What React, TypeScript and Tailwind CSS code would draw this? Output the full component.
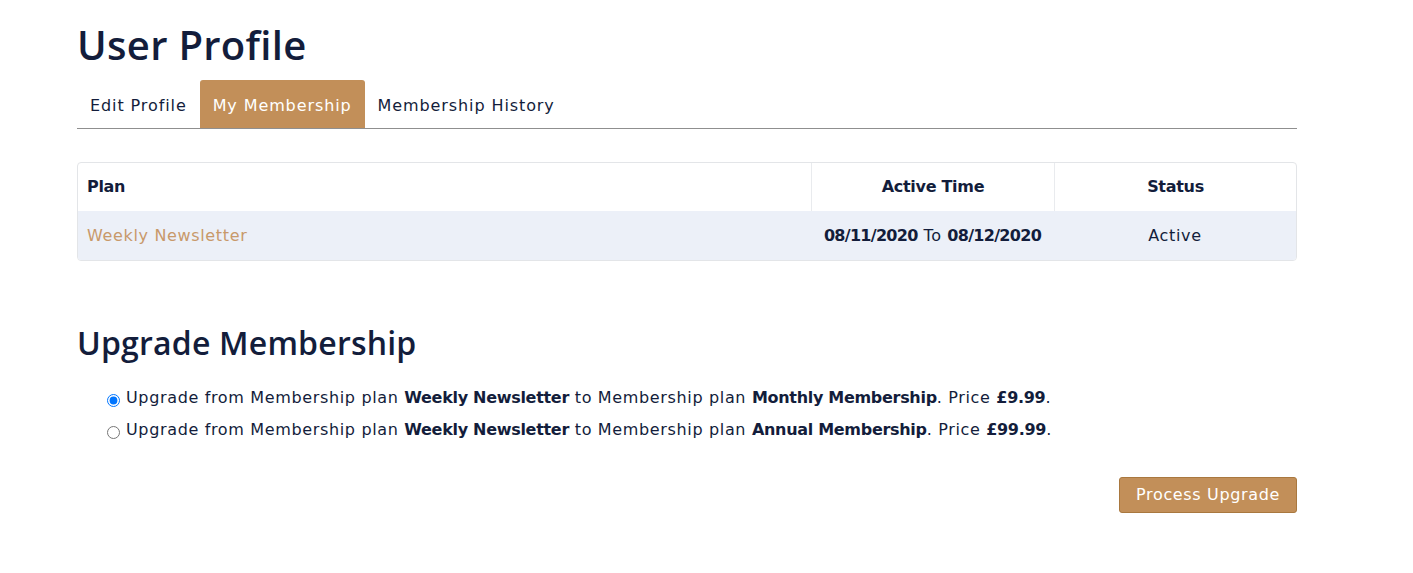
import React, { useState } from 'react'

const plans = [
    { id: 'monthly', name: 'Monthly Membership', price: '£9.99' },
    { id: 'annual', name: 'Annual Membership', price: '£99.99' }
]

const tabs = ['Edit Profile', 'My Membership', 'Membership History']

const App = () => {
    const [active, setActive] = useState('My Membership')
    const [plan, setPlan] = useState('monthly')

    return (
        <div className="min-h-screen bg-white text-[#131d3b] font-['DejaVu_Sans',sans-serif] tracking-[0.65px]">
            <div className="ml-[77px] w-[1220px] pt-[21px]">
                <h1 className="font-['Open_Sans',sans-serif] font-semibold text-[40px] leading-[1.2] tracking-[0.3px] mb-[11px]">User Profile</h1>

                <div className="flex border-b border-[#8f8f8f]">
                    {tabs.map((t) => (
                        <button
                            key={t}
                            onClick={() => setActive(t)}
                            className={
                                t === active
                                    ? 'h-[48px] px-[13px] pt-[3px] text-[16px] tracking-[0.9px] rounded-t-[3px] bg-[#c28f59] text-white'
                                    : 'h-[48px] px-[13px] pt-[3px] text-[16px] tracking-[0.9px] text-[#131d3b]'
                            }
                        >
                            {t}
                        </button>
                    ))}
                </div>

                <div className="mt-[33px] border border-[#e3e5e8] rounded-[4px] overflow-hidden">
                    <div className="grid grid-cols-[733px_243px_1fr] h-[48px] items-center font-bold text-[16px] tracking-[-0.3px]">
                        <div className="px-[9px]">Plan</div>
                        <div className="h-full flex items-center justify-center border-l border-[#e9ebee]">Active Time</div>
                        <div className="h-full flex items-center justify-center border-l border-[#e9ebee]">Status</div>
                    </div>
                    <div className="grid grid-cols-[733px_243px_1fr] h-[49px] items-center bg-[#ecf0f8] text-[16px]">
                        <div className="px-[9px] text-[#c8996a]">Weekly Newsletter</div>
                        <div className="text-center">
                            <b className="tracking-[-0.7px]">08/11/2020</b> To <b className="tracking-[-0.7px]">08/12/2020</b>
                        </div>
                        <div className="text-center">Active</div>
                    </div>
                </div>

                <h2 className="mt-[63px] font-['Open_Sans',sans-serif] font-semibold text-[32px] leading-[1.2] tracking-[0.2px]">Upgrade Membership</h2>

                <div className="mt-[24px] pl-[30px] flex flex-col gap-[8px] text-[16px]">
                    {plans.map((p) => (
                        <label key={p.id} className="flex items-center gap-[6px]">
                            <input
                                type="radio"
                                name="plan"
                                checked={plan === p.id}
                                onChange={() => setPlan(p.id)}
                                className="w-[13px] h-[13px] mt-[4px]"
                            />
                            <span>
                                Upgrade from Membership plan <b className="tracking-[-0.3px]">Weekly Newsletter</b> to Membership plan{' '}
                                <b className="tracking-[-0.3px]">{p.name}</b>. Price <b className="tracking-[-0.3px]">{p.price}</b>.
                            </span>
                        </label>
                    ))}
                </div>

                <div className="flex justify-end mt-[35px]">
                    <button className="h-[36px] px-[16px] bg-[#c28f59] border border-[#a9783f] rounded-[3px] text-white text-[16px]">
                        Process Upgrade
                    </button>
                </div>
            </div>
        </div>
    )
}

export default App
